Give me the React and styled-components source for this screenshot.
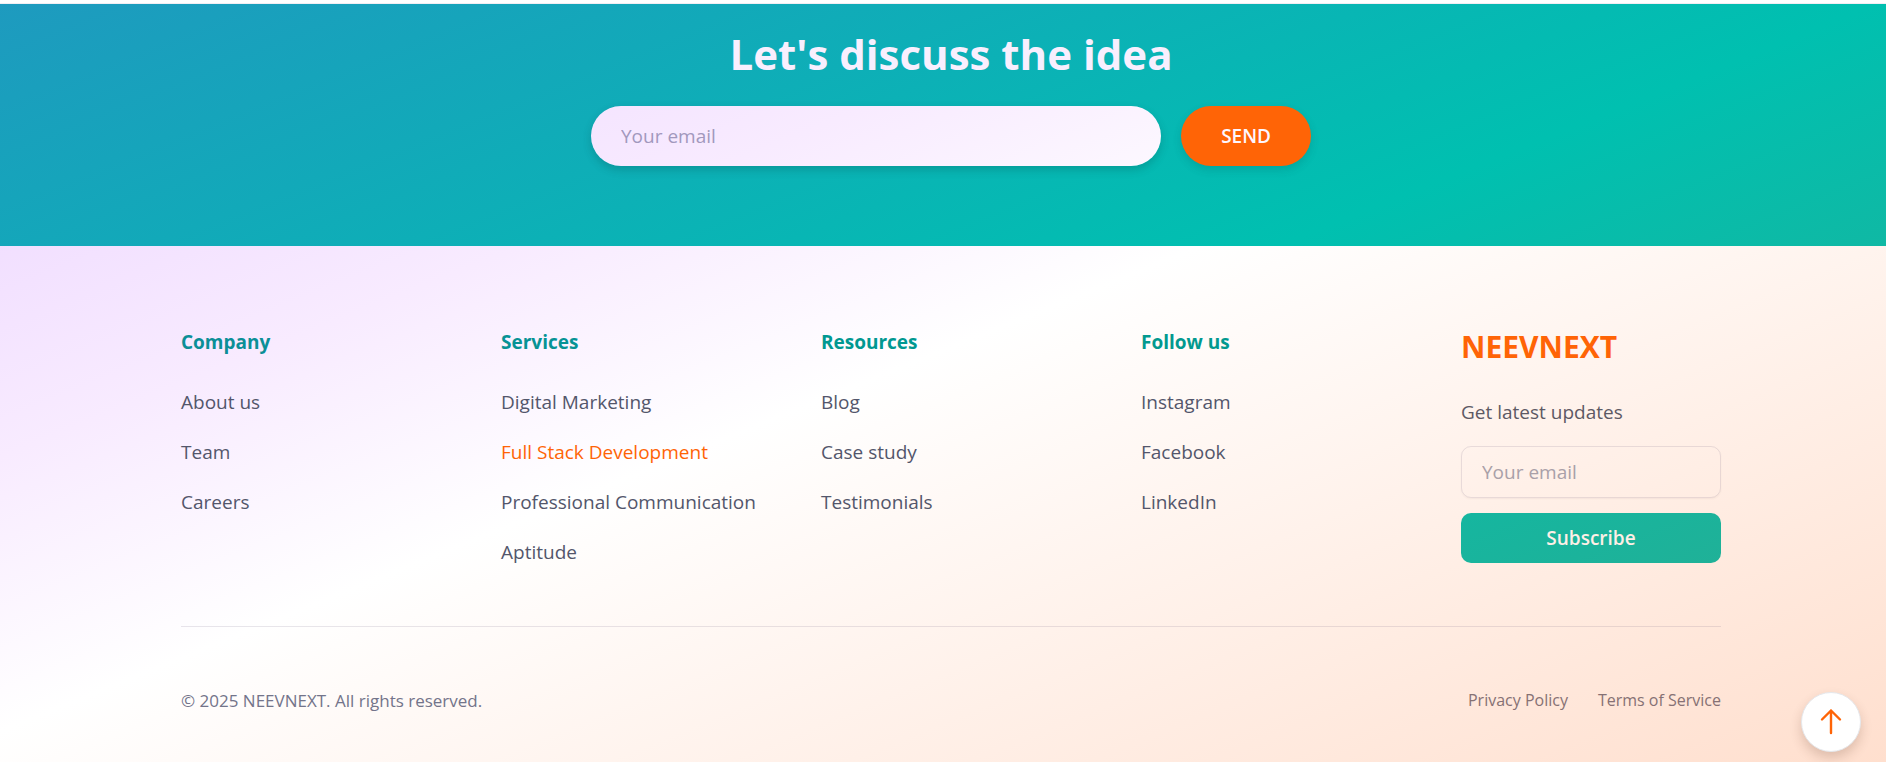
import React from "react";
import styled, { createGlobalStyle, css } from "styled-components";

const GlobalStyle = createGlobalStyle`
  *, *::before, *::after { box-sizing: border-box; }
  body {
    margin: 0;
    background: #fff;
    color: #53566b;
    font-family: "Segoe UI", "Open Sans", "Noto Sans", sans-serif;
    font-size: 19px;
    line-height: 30px;
  }
  h2, h3, p, ul { margin: 0; padding: 0; }
  ul { list-style: none; }
  button, input { font: inherit; }
`;

const paper = css`
  background: linear-gradient(to bottom right, #ead2ff 0%, #f8ebff 30%, #ffffff 48%, #ffdfce 100%) fixed;
`;

const teal = css`
  background: linear-gradient(to bottom right, #1e9abf 0%, #00c0b0 50%, #30a98b 100%) fixed;
`;

const Page = styled.div`
  padding-top: 4px;
`;

const Hero = styled.section`
  ${teal}
  display: flex;
  flex-direction: column;
  align-items: center;
  gap: 22px;
  padding: 20px 24px 80px 40px;
  box-shadow: 0 -1px 0 #f1eef4;
`;

const HeroTitle = styled.h2`
  color: #f8effe;
  font-size: 42px;
  font-weight: 700;
  line-height: 60px;
`;

const ContactForm = styled.form`
  display: flex;
  gap: 20px;
  width: 100%;
  max-width: 720px;
`;

const EmailInput = styled.input`
  flex: 1;
  min-width: 0;
  height: 60px;
  padding: 0 30px;
  border: 0;
  border-radius: 30px;
  ${paper}
  color: #53566b;
  box-shadow: 0 4px 8px rgba(0, 60, 60, 0.22);
  outline: none;
  &::placeholder { color: #a298bd; opacity: 1; }
`;

const SendButton = styled.button`
  height: 60px;
  padding: 0 40px;
  border: 0;
  border-radius: 30px;
  background: #ff6406;
  color: #fdf6ff;
  font-weight: 600;
  box-shadow: 0 4px 8px rgba(0, 60, 60, 0.16);
  cursor: pointer;
`;

const FooterArea = styled.footer`
  ${paper}
  padding: 81px 24px 48px 40px;
`;

const Container = styled.div`
  max-width: 1540px;
  margin: 0 auto;
`;

const Columns = styled.div`
  display: grid;
  grid-template-columns: repeat(5, minmax(0, 1fr));
  gap: 60px;
  padding-bottom: 59px;
  border-bottom: 1px solid rgba(90, 80, 110, 0.14);
`;

const ColumnTitle = styled.h3`
  margin-bottom: 30px;
  color: ${(p) => p.$color};
  font-size: 19px;
  font-weight: 700;
`;

const LinkList = styled.ul`
  display: grid;
  gap: 20px;
`;

const FooterLink = styled.a`
  color: ${(p) => (p.$active ? "#ff6406" : "inherit")};
  text-decoration: none;
  white-space: nowrap;
`;

const Brand = styled.h3`
  margin-bottom: 30px;
  color: #ff6406;
  font-size: 30px;
  font-weight: 700;
  line-height: 40px;
`;

const Subscribe = styled.form`
  display: flex;
  flex-direction: column;
`;

const SubscribeLabel = styled.label`
  margin-bottom: 19px;
  color: #5d5964;
`;

const SubscribeInput = styled.input`
  width: 100%;
  height: 52px;
  margin-bottom: 15px;
  padding: 0 20px;
  border: 1px solid rgba(90, 80, 110, 0.14);
  border-radius: 10px;
  background: transparent;
  color: #5d5964;
  box-shadow: 0 1px 2px rgba(90, 60, 50, 0.06);
  outline: none;
  &::placeholder { color: #a9a0a8; opacity: 1; }
`;

const SubscribeButton = styled.button`
  height: 50px;
  border: 0;
  border-radius: 10px;
  ${teal}
  color: #feefe6;
  font-weight: 600;
  cursor: pointer;
`;

const Legal = styled.div`
  display: flex;
  justify-content: space-between;
  padding-top: 60px;
  color: #73748a;
  font-size: 17px;
  line-height: 27px;
`;

const LegalLinks = styled.nav`
  display: flex;
  gap: 30px;
  color: #867174;
  font-size: 16px;
`;

const TopButton = styled.button`
  position: fixed;
  right: 25px;
  bottom: 10px;
  display: grid;
  place-items: center;
  width: 60px;
  height: 60px;
  padding: 0;
  border: 1px solid #e5e7eb;
  border-radius: 50%;
  background: #fff;
  color: #ff6406;
  box-shadow: 0 6px 12px rgba(90, 50, 30, 0.2);
  cursor: pointer;
`;

const columns = [
  { title: "Company", color: "#0b8f97", links: ["About us", "Team", "Careers"] },
  {
    title: "Services",
    color: "#069395",
    links: ["Digital Marketing", "Full Stack Development", "Professional Communication", "Aptitude"],
    active: "Full Stack Development",
  },
  { title: "Resources", color: "#009891", links: ["Blog", "Case study", "Testimonials"] },
  { title: "Follow us", color: "#02998f", links: ["Instagram", "Facebook", "LinkedIn"] },
];

const stop = (e) => e.preventDefault();

export default function App() {
  return (
    <Page>
      <GlobalStyle />
      <Hero>
        <HeroTitle>Let's discuss the idea</HeroTitle>
        <ContactForm onSubmit={stop}>
          <EmailInput type="email" placeholder="Your email" aria-label="Your email" />
          <SendButton type="submit">SEND</SendButton>
        </ContactForm>
      </Hero>
      <FooterArea>
        <Container>
          <Columns>
            {columns.map((col) => (
              <div key={col.title}>
                <ColumnTitle $color={col.color}>{col.title}</ColumnTitle>
                <LinkList>
                  {col.links.map((link) => (
                    <li key={link}>
                      <FooterLink href="#" $active={link === col.active}>{link}</FooterLink>
                    </li>
                  ))}
                </LinkList>
              </div>
            ))}
            <div>
              <Brand>NEEVNEXT</Brand>
              <Subscribe onSubmit={stop}>
                <SubscribeLabel htmlFor="updates-email">Get latest updates</SubscribeLabel>
                <SubscribeInput id="updates-email" type="email" placeholder="Your email" />
                <SubscribeButton type="submit">Subscribe</SubscribeButton>
              </Subscribe>
            </div>
          </Columns>
          <Legal>
            <p>© 2025 NEEVNEXT. All rights reserved.</p>
            <LegalLinks>
              <FooterLink href="#">Privacy Policy</FooterLink>
              <FooterLink href="#">Terms of Service</FooterLink>
            </LegalLinks>
          </Legal>
        </Container>
      </FooterArea>
      <TopButton type="button" aria-label="Back to top">
        <svg width="30" height="30" viewBox="0 0 30 30" fill="none" stroke="currentColor" strokeWidth="2.4" strokeLinecap="round" strokeLinejoin="round">
          <path d="M15 26V3.500M6 12.500L15 3.500l9 9" />
        </svg>
      </TopButton>
    </Page>
  );
}
